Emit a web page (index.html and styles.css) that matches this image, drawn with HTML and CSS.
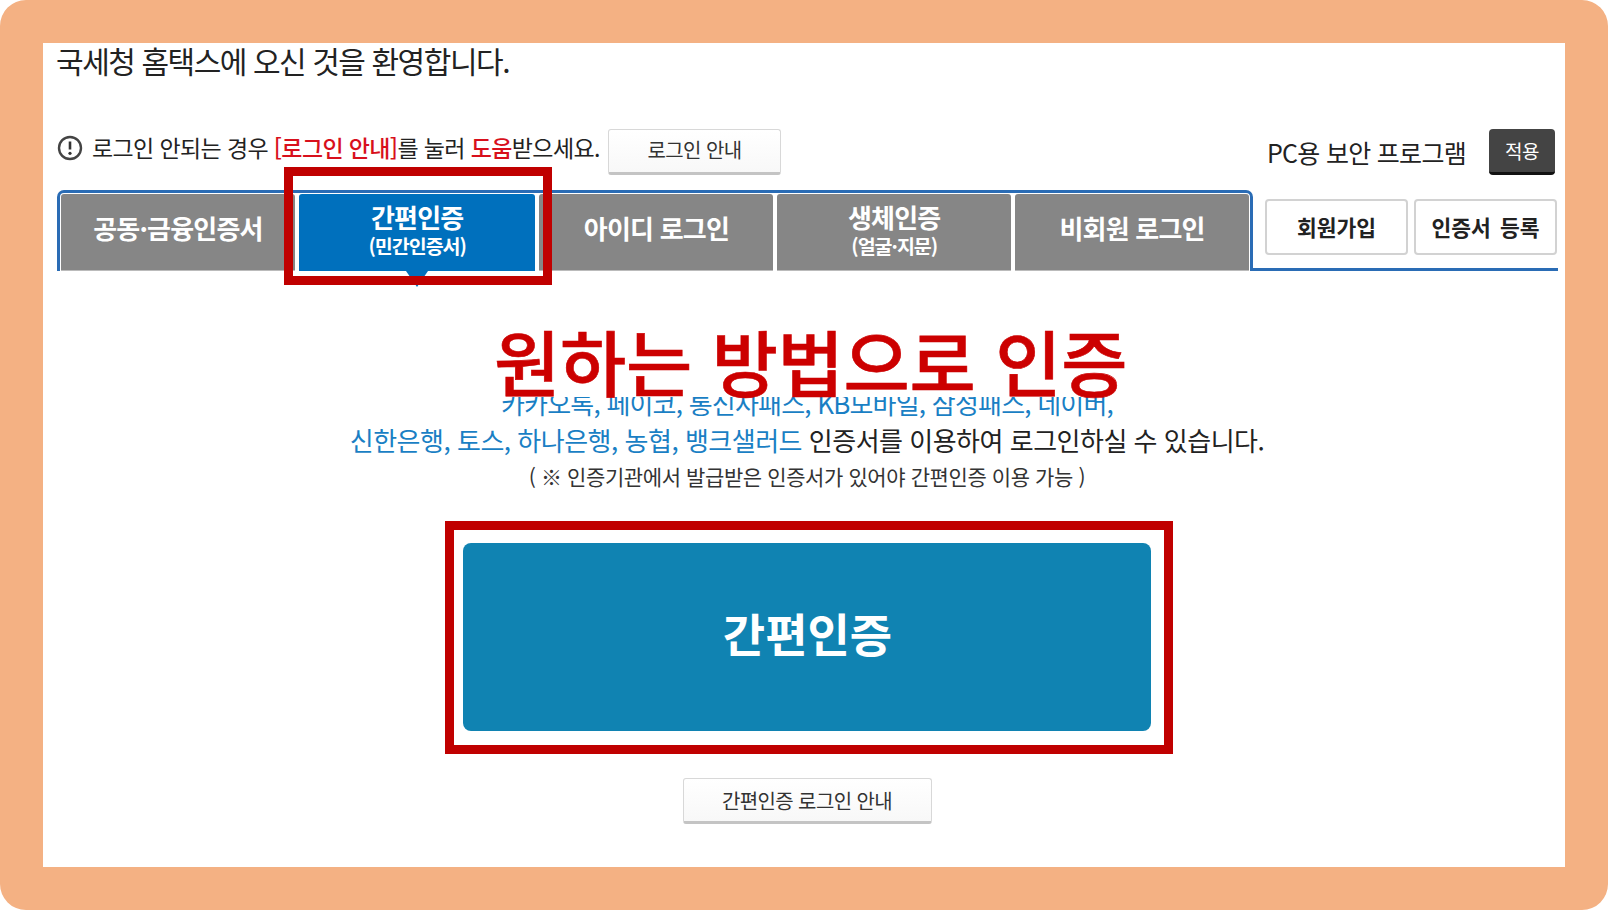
FILE: index.html
```html
<!DOCTYPE html>
<html lang="ko">

<head>
    <meta charset="UTF-8">
    <title>국세청 홈택스 로그인</title>
    <link rel="stylesheet" href="styles.css">
</head>

<body>

<div class="frame">
    <h1 class="welcome">국세청 홈택스에 오신 것을 환영합니다.</h1>

    <div class="notice-row">
        <svg class="notice-icon" width="26" height="26" viewBox="0 0 26 26">
            <circle cx="13" cy="13" r="11" fill="none" stroke="#444" stroke-width="2.4"/>
            <path d="M13 6.5v8" stroke="#333" stroke-width="2.6" fill="none"/>
            <circle cx="13" cy="18.3" r="1.6" fill="#333"/>
        </svg>
        <p class="notice-text">로그인 안되는 경우 <span class="red">[로그인 안내]</span>를 눌러 <span class="red">도움</span>받으세요.</p>
        <button class="btn btn-guide">로그인 안내</button>
        <span class="security-label">PC용 보안 프로그램</span>
        <button class="btn-apply">적용</button>
    </div>

    <div class="tab-row">
        <div class="tabs">
            <div class="tab">공동·금융인증서</div>
            <div class="tab tab-double tab-active">
                <span>간편인증</span>
                <small>(민간인증서)</small>
                <i class="caret"></i>
                <i class="mark mark-tab"></i>
            </div>
            <div class="tab">아이디 로그인</div>
            <div class="tab tab-double">
                <span>생체인증</span>
                <small>(얼굴·지문)</small>
            </div>
            <div class="tab">비회원 로그인</div>
        </div>
        <div class="side-buttons">
            <button class="btn-side">회원가입</button>
            <button class="btn-side">인증서 등록</button>
        </div>
    </div>

    <div class="guide">
        <div class="big-title">원하는 방법으로 인증</div>
        <p class="guide-line guide-first blue">카카오톡, 페이코, 통신사패스, KB모바일, 삼성패스, 네이버,</p>
        <p class="guide-line"><span class="blue">신한은행, 토스, 하나은행, 농협, 뱅크샐러드</span> 인증서를 이용하여 로그인하실 수 있습니다.</p>
        <p class="guide-note">( ※ 인증기관에서 발급받은 인증서가 있어야 간편인증 이용 가능 )</p>
        <button class="btn-main">간편인증<i class="mark mark-main"></i></button>
        <button class="btn btn-small">간편인증 로그인 안내</button>
    </div>
</div>

</body>
</html>
```

FILE: styles.css
```css
* {
    box-sizing: border-box;
}

body {
    margin: 0;
    background-color: #fff;
    font-family: "Noto Sans CJK KR", "Noto Sans", sans-serif;
    color: #222;
}

button {
    font-family: inherit;
    cursor: pointer;
}

.frame {
    width: 1608px;
    height: 910px;
    border: 43px solid #f4b183;
    border-radius: 26px;
    background-color: #fff;
    overflow: hidden;
}

.welcome {
    margin: 0;
    padding-left: 13px;
    height: 38px;
    font-size: 30px;
    font-weight: 400;
    line-height: 34px;
    letter-spacing: -1.45px;
}

.notice-row {
    display: flex;
    align-items: center;
    height: 46px;
    margin-top: 48px;
    padding: 0 10px 0 14px;
}

.notice-icon {
    flex: none;
    margin-top: -8px;
}

.notice-text {
    margin: -10px 0 0 9px;
    width: 516px;
    font-size: 23px;
    letter-spacing: -0.62px;
    white-space: nowrap;
}

.red {
    color: #d8101c;
    font-weight: 500;
}

.btn {
    padding: 0 0 3px;
    background: linear-gradient(#fff, #f8f8f8);
    border: 1px solid #d8d8d8;
    border-bottom: 3px solid #c4c4c4;
    border-radius: 3px;
    color: #333;
    font-size: 20px;
    letter-spacing: -0.6px;
}

.btn-guide {
    width: 173px;
    height: 46px;
}

.security-label {
    margin: 0 0 0 auto;
    font-size: 25px;
    letter-spacing: -0.7px;
    white-space: nowrap;
}

.btn-apply {
    width: 66px;
    height: 46px;
    margin-left: 23px;
    padding: 0;
    background-color: #444;
    border: none;
    border-bottom: 3px solid #111;
    border-radius: 4px;
    color: #fff;
    font-size: 19px;
    letter-spacing: -0.5px;
}

.tab-row {
    display: flex;
    height: 81px;
    margin: 15px 7px 0 14px;
}

.tabs {
    display: flex;
    gap: 4px;
    width: 1196px;
    padding: 1px 1px 0;
    border: 3px solid #2a6cb5;
    border-bottom: none;
    border-radius: 7px 7px 0 0;
}

.tab {
    position: relative;
    flex: 1;
    display: flex;
    flex-direction: column;
    align-items: center;
    justify-content: center;
    padding-bottom: 10px;
    background-color: #868686;
    border-bottom: 1px solid #bbb;
    border-radius: 3px 3px 0 0;
    color: #fff;
    font-size: 26px;
    font-weight: 700;
    letter-spacing: -0.8px;
    line-height: 33px;
}

.tab-double {
    padding-bottom: 6px;
}

.tab small {
    font-size: 19.5px;
    line-height: 26px;
    letter-spacing: -1px;
}

.tab-active {
    flex: 1.012;
    z-index: 1;
    background-color: #0070bd;
    border-bottom: none;
}

.caret {
    position: absolute;
    left: 50%;
    top: 100%;
    margin-left: -11px;
    border-left: 11px solid transparent;
    border-right: 11px solid transparent;
    border-top: 16px solid #0070bd;
}

.mark {
    position: absolute;
    border: 9px solid #c00000;
}

.mark-tab {
    top: -27px;
    left: -15px;
    right: -17px;
    bottom: -14px;
}

.side-buttons {
    flex: 1;
    display: flex;
    gap: 6px;
    padding: 9px 1px 0 12px;
    border-bottom: 3px solid #2a6cb5;
}

.btn-side {
    flex: 1;
    height: 56px;
    padding: 0 0 2px;
    background-color: #fff;
    border: 2px solid #d2d2d2;
    border-radius: 4px;
    color: #222;
    font-size: 21.5px;
    font-weight: 700;
    letter-spacing: 0;
    word-spacing: 3px;
}

.guide {
    position: relative;
    display: flex;
    flex-direction: column;
    align-items: center;
    padding: 113px 0 0 6px;
    text-align: center;
}

/* white strip hides the top of the first line, as in the annotated capture */
.big-title {
    position: absolute;
    top: 40px;
    left: 50%;
    height: 86px;
    margin-left: -316px;
    padding: 0 6px;
    background-color: #fff;
    color: #cc0000;
    font-size: 72px;
    font-weight: 500;
    line-height: 98px;
    letter-spacing: -0.3px;
    white-space: nowrap;
    -webkit-text-stroke: 0.6px #cc0000;
}

.guide-line {
    margin: 0;
    font-size: 26px;
    line-height: 37px;
    letter-spacing: -0.5px;
    white-space: nowrap;
}

.guide-first {
    letter-spacing: -0.8px;
}

.blue {
    color: #1a7fc4;
}

.guide-note {
    margin: 0;
    height: 36px;
    color: #333;
    font-size: 21px;
    line-height: 36px;
    letter-spacing: -0.4px;
    white-space: nowrap;
}

.btn-main {
    position: relative;
    width: 688px;
    height: 188px;
    margin-top: 49px;
    padding: 0 0 10px 1px;
    background-color: #1083b2;
    border: none;
    border-radius: 8px;
    color: #fff;
    font-size: 46px;
    font-weight: 700;
}

.mark-main {
    top: -22px;
    left: -18px;
    right: -22px;
    bottom: -23px;
}

.btn-small {
    width: 249px;
    height: 46px;
    margin-top: 47px;
    padding: 0;
}
```
